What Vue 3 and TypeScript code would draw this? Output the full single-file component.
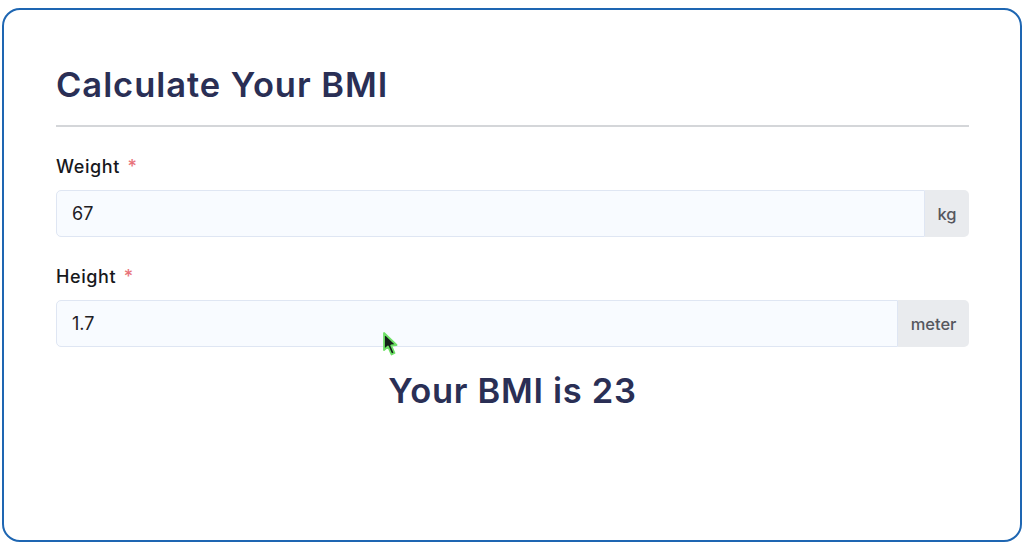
<script setup lang="ts">
interface Field { label: string; value: string; unit: string }
const fields: Field[] = [
  { label: 'Weight', value: '67', unit: 'kg' },
  { label: 'Height', value: '1.7', unit: 'meter' },
]
const bmi = 23
</script>

<template>
  <div class="page">
    <main class="card">
      <h1 class="title">Calculate Your BMI</h1>
      <form class="form" @submit.prevent>
        <div v-for="f in fields" :key="f.label" class="field">
          <label class="label">{{ f.label }} <span class="req">*</span></label>
          <div class="group">
            <div class="input">{{ f.value }}</div>
            <div class="addon">{{ f.unit }}</div>
          </div>
        </div>
      </form>
      <p class="result">Your BMI is {{ bmi }}</p>
      <svg class="cursor" width="18" height="26" viewBox="0 0 18 26" aria-hidden="true">
        <path d="M2 2 L2 19 L6 15.5 L9.5 23.5 L12.5 22 L9.2 14.5 L14.5 14 Z" fill="#14201a" stroke="#6ee066" stroke-width="1.8" stroke-linejoin="round" />
      </svg>
    </main>
  </div>
</template>

<style>
html, body { margin: 0; background: #fff; }
</style>

<style scoped>
.page {
  box-sizing: border-box;
  width: 1024px;
  height: 550px;
  padding: 8px 2px 8px 2px;
  font-family: Inter, "Liberation Sans", sans-serif;
}
.card {
  position: relative;
  box-sizing: border-box;
  height: 534px;
  border: 2px solid #1e66b2;
  border-radius: 18px;
  padding: 54px 51px 0 52px;
  background: #fff;
}
.title {
  margin: 0;
  height: 61px;
  line-height: 42px;
  font-size: 34.5px;
  letter-spacing: 0.95px;
  font-weight: 600;
  color: #2a2f55;
  border-bottom: 2px solid #d4d6d9;
  box-sizing: content-box;
}
.form { display: flex; flex-direction: column; gap: 28px; margin-top: 28px; }
.field { display: flex; flex-direction: column; gap: 11px; }
.label { font-size: 18px; line-height: 24px; font-weight: 500; letter-spacing: 0.6px; color: #17181c; }
.req { color: #e8727a; margin-left: 2px; font-size: 18px; }
.group { display: flex; height: 47px; }
.input {
  flex: 1;
  box-sizing: border-box;
  display: flex;
  align-items: center;
  padding-left: 15px;
  font-size: 18px;
  color: #1f2024;
  background: #f8fbff;
  border: 1px solid #dfe6f3;
  border-radius: 5px 0 0 5px;
}
.addon {
  display: flex;
  align-items: center;
  padding: 0 12.5px;
  font-size: 16.5px;
  font-weight: 500;
  color: #55575e;
  background: #e9ebee;
  border-radius: 0 5px 5px 0;
}
.result {
  margin: 22px 0 0;
  text-align: center;
  font-size: 34.5px;
  letter-spacing: 0.7px;
  line-height: 44px;
  font-weight: 600;
  color: #2a2f55;
}
.cursor { position: absolute; left: 378px; top: 321px; }
</style>
